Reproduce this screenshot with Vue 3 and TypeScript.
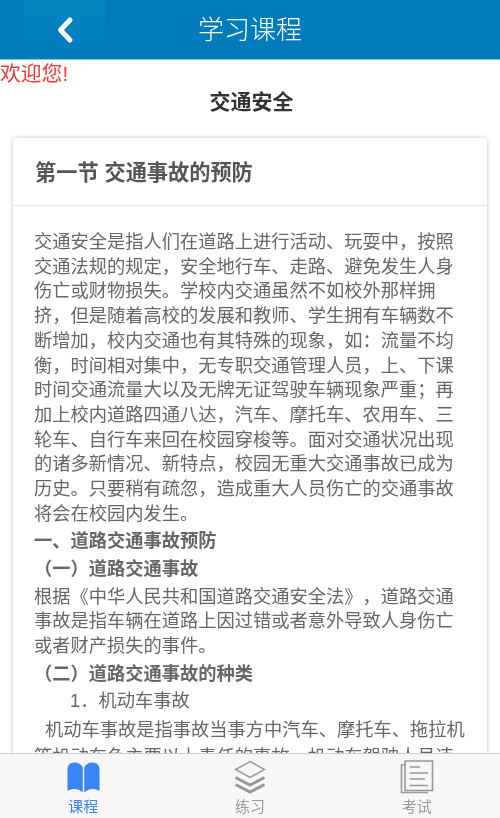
<script setup lang="ts">
const tabs = [
  { key: 'book', label: '课程', active: true },
  { key: 'layers', label: '练习', active: false },
  { key: 'doc', label: '考试', active: false },
]
</script>

<template>
  <div class="page">
    <header class="bar">
      <button class="back" type="button" aria-label="返回">
        <svg width="20" height="28" viewBox="0 0 20 28"><path d="M15 4 L5.500 14 L15 24" fill="none" stroke="#fff" stroke-width="5" stroke-linecap="round" stroke-linejoin="round" /></svg>
      </button>
      <h1 class="bar-title">学习课程</h1>
    </header>
    <main class="main">
      <div class="welcome">欢迎您!</div>
      <h2 class="course">交通安全</h2>
      <section class="card">
        <h3 class="card-head">第一节 交通事故的预防</h3>
        <div class="card-body">
          <p>交通安全是指人们在道路上进行活动、玩耍中，按照交通法规的规定，安全地行车、走路、避免发生人身伤亡或财物损失。学校内交通虽然不如校外那样拥挤，但是随着高校的发展和教师、学生拥有车辆数不断增加，校内交通也有其特殊的现象，如：流量不均衡，时间相对集中，无专职交通管理人员，上、下课时间交通流量大以及无牌无证驾驶车辆现象严重；再加上校内道路四通八达，汽车、摩托车、农用车、三轮车、自行车来回在校园穿梭等。面对交通状况出现的诸多新情况、新特点，校园无重大交通事故已成为历史。只要稍有疏忽，造成重大人员伤亡的交通事故将会在校园内发生。</p>
          <p class="strong">一、道路交通事故预防</p>
          <p class="strong">（一）道路交通事故</p>
          <p>根据《中华人民共和国道路交通安全法》，道路交通事故是指车辆在道路上因过错或者意外导致人身伤亡或者财产损失的事件。</p>
          <p class="strong">（二）道路交通事故的种类</p>
          <p class="sub">1．机动车事故</p>
          <p class="lead">机动车事故是指事故当事方中汽车、摩托车、拖拉机等机动车负主要以上责任的事故。机动车驾驶人员违</p>
        </div>
      </section>
    </main>
    <nav class="tabs">
      <div v-for="t in tabs" :key="t.key" class="tab" :class="{ on: t.active }">
        <span class="tab-icon">
          <svg v-if="t.key === 'book'" width="33" height="31" viewBox="0 0 33 31">
            <path d="M15.800 5.500 C14.500 2.500 11.500 0.500 8 0.500 C3 0.500 0.500 3 0.500 8 L0.500 29 C6 26 11.500 26.500 15.800 30.500 Z" fill="currentColor" />
            <path d="M17.200 5.500 C18.500 2.500 21.500 0.500 25 0.500 C30 0.500 32.500 3 32.500 8 L32.500 29 C27 26 21.500 26.500 17.200 30.500 Z" fill="currentColor" />
          </svg>
          <svg v-else-if="t.key === 'layers'" width="32" height="34" viewBox="0 0 32 34" fill="none" stroke="currentColor">
            <path d="M16 1.500 L30.500 9.500 L16 17.500 L1.500 9.500 Z" stroke-width="1.500" />
            <path d="M1.500 17.500 L16 25 L30.500 17.500" stroke-width="3" />
            <path d="M1.500 24.500 L16 32 L30.500 24.500" stroke-width="3" />
          </svg>
          <svg v-else width="34" height="34" viewBox="0 0 34 34" fill="none" stroke="currentColor" stroke-width="1.600">
            <path d="M5 5 H1.500 V32.500 H28" />
            <path d="M5 1 H32.500 V30.500 H5 Z" />
            <path d="M10 7 H20 M10 13 H28 M10 19 H25 M10 25.500 H28" />
          </svg>
        </span>
        <span class="tab-label">{{ t.label }}</span>
      </div>
    </nav>
  </div>
</template>

<style scoped>
.page {
  width: 500px;
  height: 818px;
  display: flex;
  flex-direction: column;
  overflow: hidden;
  background: #fff;
  font-family: "Liberation Sans", "Noto Sans CJK SC", sans-serif;
  filter: blur(0.6px);
}
.bar {
  flex: none;
  height: 60px;
  box-sizing: border-box;
  border-bottom: 1px solid #8cc6e4;
  background: #007bbb;
  display: flex;
  align-items: center;
  justify-content: center;
  position: relative;
}
.back {
  position: absolute;
  left: 24px;
  top: 0;
  width: 81px;
  height: 59px;
  border: 0;
  padding: 0;
  background: linear-gradient(#0585c0, #007bbb);
  display: flex;
  align-items: center;
  justify-content: center;
}
.bar-title {
  margin: 0;
  color: #fff;
  font-size: 26px;
  font-weight: 300;
  line-height: 62px;
}
.main {
  flex: 1;
  min-height: 0;
  overflow: hidden;
}
.welcome {
  color: #f33;
  font-size: 20.800px;
  line-height: 27px;
}
.course {
  margin: 0;
  padding-left: 3px;
  text-align: center;
  color: #333;
  font-size: 21px;
  font-weight: 700;
  line-height: 30px;
}
.card {
  margin: 21px 13px 0;
  background: #fff;
  border-radius: 3px;
  box-shadow: 0 0 4px rgba(0, 0, 0, 0.25);
}
.card-head {
  margin: 0;
  height: 68px;
  box-sizing: border-box;
  padding: 0 22px;
  border-bottom: 1px solid #e8e8e8;
  color: #555;
  font-size: 21.200px;
  font-weight: 700;
  line-height: 69px;
}
.card-body {
  padding: 24px 21px 0;
  color: #666;
  font-size: 18.250px;
  line-height: 24.700px;
  text-spacing-trim: space-all;
}
.card-body p {
  margin: 0 0 2.900px;
}
.card-body .strong {
  font-weight: 700;
  color: #666;
}
.card-body .sub {
  padding-left: 36px;
  margin-bottom: 1.800px;
}
.card-body .lead {
  text-indent: 11px;
  line-height: 27px;
}
.tabs {
  flex: none;
  height: 65px;
  box-sizing: border-box;
  border-top: 1px solid #ccc;
  background: #f7f7f7;
  display: grid;
  grid-template-columns: repeat(3, 1fr);
}
.tab {
  color: #999;
  display: flex;
  flex-direction: column;
  align-items: center;
  padding-top: 5px;
}
.tab.on {
  color: #3a84f5;
}
.tab-icon {
  height: 36px;
  display: flex;
  align-items: center;
  justify-content: center;
}
.tab-label {
  font-size: 15px;
  line-height: 18px;
  margin-top: 3px;
}
</style>
